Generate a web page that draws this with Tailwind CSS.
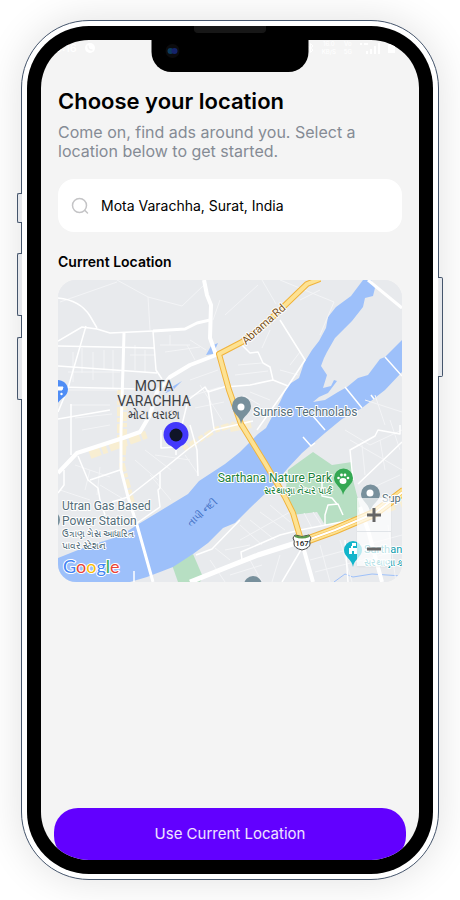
<!DOCTYPE html>
<html lang="en">
<head>
    <meta charset="UTF-8">
    <meta name="viewport" content="width=device-width, initial-scale=1.0">
    <title>Choose your location</title>
    <script src="https://cdn.jsdelivr.net/npm/@tailwindcss/browser@4"></script>
</head>
<body class="bg-white font-['Inter','Noto_Sans',sans-serif] text-black">
    <div class="min-h-screen flex px-[21px] py-5 overflow-hidden">
        <!-- Phone frame -->
        <div class="relative flex flex-1 rounded-[68px] border border-slate-600 bg-white p-[5px] shadow-[0_0_40px_rgba(0,0,0,0.12)]">
            <!-- Side keys -->
            <span class="absolute -left-[5px] top-[172px] h-[30px] w-[5px] rounded-l-xs border border-r-0 border-slate-600 bg-gray-200"></span>
            <span class="absolute -left-[5px] top-[232px] h-[63px] w-[5px] rounded-l-xs border border-r-0 border-slate-600 bg-gray-200"></span>
            <span class="absolute -left-[5px] top-[316px] h-[63px] w-[5px] rounded-l-xs border border-r-0 border-slate-600 bg-gray-200"></span>
            <span class="absolute -right-[5px] top-[256px] h-[100px] w-[5px] rounded-r-xs border border-l-0 border-slate-600 bg-gray-200"></span>

            <div class="relative flex flex-1 rounded-[62px] bg-black p-[14px]">
                <span class="absolute left-1/2 top-0 h-[7px] w-[72px] -translate-x-1/2 rounded-b-sm border border-t-0 border-neutral-900 bg-neutral-900"></span>

                <main class="relative flex flex-1 flex-col overflow-hidden rounded-[48px] bg-[#f4f4f4]">
                    <!-- Notch -->
                    <div class="absolute left-1/2 top-0 z-10 h-8 w-[157px] -translate-x-1/2 rounded-b-[20px] bg-black">
                        <svg class="ml-3 mt-1" width="18" height="14" viewBox="0 0 18 14">
                            <circle cx="9" cy="7" r="7" fill="#0b0b0d"/>
                            <circle cx="7" cy="7" r="3" fill="#0c3a5c"/>
                            <circle cx="11" cy="7" r="3" fill="#15236b"/>
                        </svg>
                    </div>

                    <!-- Status bar -->
                    <div class="flex h-4 items-center justify-between pl-[14px] pr-6 text-[11px] font-medium text-white">
                        <div class="flex items-center gap-2">
                            <span>3:16</span>
                            <svg width="10" height="10" viewBox="0 0 10 10">
                                <circle cx="5" cy="5" r="5" fill="#fff"/>
                                <path d="M3 3c0 2.500 1.500 4 4 4" fill="none" stroke="#f4f4f4" stroke-width="1.500" stroke-linecap="round"/>
                            </svg>
                        </div>
                        <div class="flex items-center gap-2">
                            <svg width="7" height="10" viewBox="0 0 7 10" fill="none" stroke="#fff"><path d="M1 3l5 4-2.500 2.500v-9L6 3 1 7"/></svg>
                            <div class="flex flex-col items-center text-[6px]/[8px]"><span>16.0</span><span>KB/S</span></div>
                            <div class="flex flex-col items-center text-[6px]/[8px]"><span>Vo</span><span>5G</span></div>
                            <svg width="20" height="12" viewBox="0 0 20 12" fill="#fff"><path d="M6 9h2v3H6zM10 7h2v5h-2zM14 4h2v8h-2zM18 1h2v11h-2zM0 1h2v2H0zM4 1h4v2H4z"/></svg>
                            <svg width="7" height="10" viewBox="0 0 7 10" fill="#fff"><path d="M0 1h2V0h3v1h2v9H0z"/></svg>
                        </div>
                    </div>

                    <div class="flex flex-1 flex-col px-[17px] pt-[31px]">
                        <h1 class="text-[22px]/[28px] font-semibold">Choose your location</h1>
                        <p class="mt-2 max-w-[320px] text-[16px]/[19px] text-[#858b94]">Come on, find ads around you. Select a location below to get started.</p>

                        <label class="mt-[18px] flex h-[53px] items-center gap-3 rounded-2xl bg-white px-[13px]">
                            <svg width="18" height="18" viewBox="0 0 18 18" fill="none" stroke="#c4c4c6" stroke-width="1.500" stroke-linecap="round">
                                <circle cx="8.500" cy="8.500" r="7"/>
                                <path d="M14 13.500l2.500 2.500"/>
                            </svg>
                            <input type="text" aria-label="Location" value="Mota Varachha, Surat, India" class="min-w-0 flex-1 bg-transparent text-[14px] outline-none">
                        </label>

                        <h2 class="mt-[19px] text-[14px]/[22px] font-semibold">Current Location</h2>

                        <!-- Map -->
                        <div class="relative mt-[7px] overflow-hidden rounded-[18px] bg-[#e8eaed]">
                            <svg class="block w-full" viewBox="58 280 344 302" font-family="Roboto, 'Noto Sans', sans-serif">
                                <rect x="58" y="280" width="344" height="302" fill="#e8eaed"/>

                                <!-- parks -->
                                <g fill="#b7dfc3">
                                    <path d="M313 452L332 465L352 462L353 480L360 507L357 517L342 522L325 525L317 512L292 515L285 497L288 470Z"/>
                                    <path d="M172 565L193 554L203 577L200 582H178Z"/>
                                </g>

                                <!-- river -->
                                <path fill="#9dc0fa" d="M363 280L351 296L336 307L328 317L326 328L319 341L312 350L304 363L299 378L288 385L280 402L266 428L258 434L240 452L225 464L199 481L188 494L160 511L137 525L120 536L88 546L58 558V582H130L147 577L173 567L193 554L208 543L223 528L235 523L250 508L272 487L288 468L302 453L325 433L342 419L362 408L385 390L402 372V340L385 357L380 359L368 375L358 378L347 387L338 392L325 400L313 402L319 397L328 393L337 381L334 380L331 386L323 388L327 375L321 366L324 358L327 352L335 338L345 328L352 321L363 307L365 298L373 296L375 288L371 280Z"/>
                                <g fill="#9dc0fa">
                                    <path d="M206 355L211 346L218 343L213 354Z"/>
                                    <path d="M165 391L182 381L174 389L166 393Z"/>
                                </g>
                                <path d="M334 582L345 574L353 577L372 574L402 576" fill="none" stroke="#9dc0fa"/>

                                <!-- built-up areas -->
                                <g stroke="#f8eed2" fill="none">
                                    <path d="M120 390V440M124 395V440L122 465L132 503" stroke-width="6" stroke-dasharray="9 2 4 2"/>
                                    <path d="M90 455L148 434" stroke-width="8" stroke-dasharray="11 2 5 3"/>
                                    <path d="M184 449L215 430L235 424" stroke-width="6" stroke-dasharray="5 2 8 3"/>
                                    <path d="M330 530L402 503" stroke-width="8" stroke-dasharray="9 6"/>
                                    <path d="M251 424L230 428" stroke-width="8"/>
                                </g>

                                <!-- small streets -->
                                <g fill="none" stroke="#f3f4f6" stroke-width="1">
                                    <path d="M60 302L117 282M117 280L148 297L150 330M148 297L182 306L204 285M225 315L258 285M262 280L276 304M280 280L334 302L320 335"/>
                                    <path d="M73 352V382M82 348V373M93 352V380M104 350V370M113 350V388M135 345V370M145 350V372M68 372H120M66 390H118M130 355H155M160 345H190M165 352L200 347M170 335V345M187 345L195 360"/>
                                    <path d="M135 402H147M132 415L145 420M70 405H110M75 418L112 414M82 430L110 425M190 340L206 350M220 300L213 320M190 380L218 370M200 385L222 420M185 398L220 387M195 408L224 402"/>
                                    <path d="M75 465L110 477M90 470L85 490M100 467L97 495M60 490L90 500M135 460L158 480M145 450L171 470M150 475L171 500M185 455L198 474M100 485L125 500M155 455L190 460"/>
                                    <path d="M238 365L262 363M235 375L268 371M243 395L260 405M250 392L270 400M280 370L298 375M290 365L300 352M270 330L262 348M320 290L300 300"/>
                                    <path d="M345 430L370 445L402 430M350 440L402 470M362 445L365 475M380 440L385 470M390 420L400 450M365 400L402 412M375 395L385 425M372 488L400 475"/>
                                    <path d="M240 525L262 545M250 520L275 540M260 512L285 530M270 505L290 522M240 540L290 512M280 555L272 582M250 560L262 582M230 575L262 565M320 545L330 582M340 540L352 582M310 560L402 535M315 572L402 550M388 525L396 582"/>
                                    <path d="M210 560L225 582M225 550L250 545M215 548L230 560M304 513L312 528M313 512L322 526"/>
                                </g>

                                <!-- white roads -->
                                <g fill="none" stroke="#fff" stroke-width="1.500" stroke-linejoin="round">
                                    <path d="M58 298Q80 300 90 316L97 328M58 341L82 327L97 329L110 333L153 331M86 326L68 388L58 412"/>
                                    <path d="M58 346L154 348M58 366L157 373M58 387L140 389M58 419L110 410M153 331L156 370L162 379"/>
                                    <path d="M58 493L64 485V470M71 404V455M78 456L88 480L98 488L100 500L105 515M90 480L120 470M112 502L128 497"/>
                                    <path d="M128 497L160 472L187 450L214 430L253 421M160 472V488L158 490L160 507L137 523M161 430V448L176 447V455M190 425L197 450L198 476"/>
                                    <path d="M182 425L188 400L205 387L208 392L227 386M208 390L214 429"/>
                                    <path d="M280 320L305 360L288 386L257 430M225 387L250 385L273 380L288 386M242 345L250 353L258 352L263 363L270 367L273 380"/>
                                    <path d="M385 357L402 376M345 387L362 408M371 395L374 399M240 520L212 549L196 555M402 442L358 484M400 425V434L378 430L375 436L350 450L353 480"/>
                                    <path d="M242 560L241 552L280 535L300 530L357 519M303 437L311 446L315 443M313 416L325 430M134 571V582M345 540L348 582M302 548L282 582M325 525V515L328 505L338 504L343 515"/>
                                    <path d="M337 504L332 498L322 496V480"/>
                                </g>
                                <g fill="none" stroke="#fff" stroke-linejoin="round">
                                    <path d="M153 331L185 329L197 323L210 320" stroke-width="3"/>
                                    <path d="M124 333L123 368L121 430V470L128 497L137 525L153 582" stroke-width="3"/>
                                    <path d="M368 280L402 308" stroke-width="3"/>
                                    <path d="M204 280L207 295L211 305L210 338L216 355L190 365L170 377L157 392L150 415L140 432L123 438L77 453L58 473" stroke-width="4"/>
                                    <path d="M190 582L230 566L258 555L302 541" stroke-width="5"/>
                                    <path d="M302 543L313 582M360 507L368 530L382 582" stroke-width="4"/>
                                </g>

                                <!-- highways -->
                                <g fill="none" stroke-linejoin="round">
                                    <path d="M320 279L307 284L280 310L262 327L242 342L219 354L229 390L241 424L265 463L285 497L293 513L301 540" stroke="#f0b33c" stroke-width="6"/>
                                    <path d="M320 279L307 284L280 310L262 327L242 342L219 354L229 390L241 424L265 463L285 497L293 513L301 540" stroke="#fde293" stroke-width="4"/>
                                    <path d="M302 542L335 530L375 513L404 491" stroke="#f0b33c" stroke-width="9"/>
                                    <path d="M302 542L335 530L375 513L404 491" stroke="#fde293" stroke-width="7"/>
                                    <path d="M302 542L335 530L375 513L404 491" stroke="#f5bd4c" stroke-width="3"/>
                                    <path d="M302 542L335 530L375 513L404 491" stroke="#fff" stroke-width="2"/>
                                </g>

                                <!-- route shield -->
                                <path d="M295 535Q302 538 309 535L311 538Q309 541 310 544Q310 548 302 550Q294 548 294 544Q295 541 293 538Z" fill="#fff" stroke="#444" stroke-width="1"/>
                                <path d="M295 536Q302 539 309 536" fill="none" stroke="#5b9b4c" stroke-width="2"/>
                                <text x="302" y="546" text-anchor="middle" font-size="8" font-weight="500" fill="#222">167</text>

                                <!-- place pins -->
                                <g fill="#78909c">
                                    <path d="M241 424C240 415 232 414 232 406A9 9 0 0 1 251 406C251 414 243 415 241 424Z"/>
                                    <path d="M370 512C369 503 361 501 361 494A9 9 0 0 1 380 494C380 501 372 503 370 512Z"/>
                                    <circle cx="253" cy="585" r="9"/>
                                    <circle cx="51" cy="520" r="9"/>
                                </g>
                                <circle cx="241" cy="407" r="3.500" fill="#fff"/>
                                <circle cx="370" cy="493" r="3.500" fill="#fff"/>
                                <circle cx="253" cy="586" r="4" fill="#546e7a"/>
                                <path d="M343 495C342 487 334 485 334 478A9 9 0 0 1 353 478C353 485 345 487 343 495Z" fill="#34a853"/>
                                <g fill="#fff">
                                    <ellipse cx="343" cy="481" rx="3.500" ry="3"/>
                                    <circle cx="338.500" cy="478" r="1.300"/>
                                    <circle cx="341.500" cy="475" r="1.400"/>
                                    <circle cx="345" cy="475" r="1.400"/>
                                    <circle cx="348" cy="478" r="1.300"/>
                                </g>
                                <path d="M353 567C352 559 344 557 344 550A9 9 0 0 1 362 550C362 557 354 559 353 567Z" fill="#12b5cb"/>
                                <path d="M349 554V548H351V546H352V543H356V546H353V548H357V554H354V551H352V554Z" fill="#fff"/>
                                <path d="M57 406C58 398 68 398 68 389A10 10 0 0 0 51 383V400Z" fill="#4f8df5"/>
                                <path d="M56 387H63L62 390H56" fill="#fff" stroke="#fff"/>
                                <circle cx="61.500" cy="394" r="1.200" fill="#fff"/>

                                <!-- labels -->
                                <g stroke="#fff" stroke-width="2" stroke-linejoin="round" paint-order="stroke">
                                    <g text-anchor="middle" fill="#3c4043" stroke="#e8eaed">
                                        <text x="154" y="391" font-size="14">MOTA</text>
                                        <text x="154" y="406" font-size="14">VARACHHA</text>
                                        <text x="154" y="419" font-size="12">મોટા વરાછા</text>
                                    </g>
                                    <g fill="#546e7a">
                                        <text x="253" y="416" font-size="12">Sunrise Technolabs</text>
                                        <text x="62" y="510" font-size="12">Utran Gas Based</text>
                                        <text x="62" y="525" font-size="12">Power Station</text>
                                        <text x="62" y="537" font-size="9">ઉત્રાણ ગેસ આધારિત</text>
                                        <text x="62" y="549" font-size="9">પાવર સ્ટેશન</text>
                                        <text x="382" y="502" font-size="11">Sup</text>
                                    </g>
                                    <g fill="#188038" text-anchor="end">
                                        <text x="332" y="482" font-size="12">Sarthana Nature Park</text>
                                        <text x="332" y="494" font-size="9">સરથાણા નેચર પાર્ક</text>
                                    </g>
                                    <g fill="#129eaf">
                                        <text x="364" y="553" font-size="11">Sarthan</text>
                                        <text x="364" y="566" font-size="9">સરથાણા ક</text>
                                    </g>
                                    <text transform="translate(246 345) rotate(-42)" font-size="11" fill="#7a5218">Abrama Rd</text>
                                </g>
                                <text transform="translate(191 527) rotate(-42)" font-size="10" fill="#3f6fc4">તાપી નદી</text>

                                <!-- current position -->
                                <path d="M176 450L171 446A12.500 12.500 0 1 1 181 446Z" fill="#4338fb"/>
                                <circle cx="176" cy="435" r="6.500" fill="#101528"/>

                                <text x="63" y="573" font-size="18" font-weight="400" font-family="Lato, sans-serif" stroke="#fff" stroke-width="2" paint-order="stroke"><tspan fill="#4285f4">G</tspan><tspan fill="#ea4335">o</tspan><tspan fill="#fbbc04">o</tspan><tspan fill="#4285f4">g</tspan><tspan fill="#34a853">l</tspan><tspan fill="#ea4335">e</tspan></text>
                            </svg>

                            <!-- Zoom controls -->
                            <div class="absolute bottom-4 right-[11px] flex w-[34px] flex-col divide-y divide-gray-300/60 bg-white/70 shadow-xs">
                                <button type="button" aria-label="Zoom in" class="flex h-[34px] items-center justify-center">
                                    <svg width="16" height="16" viewBox="0 0 16 16" stroke="#666" stroke-width="3"><path d="M8 1v14M1 8h14"/></svg>
                                </button>
                                <button type="button" aria-label="Zoom out" class="flex h-[34px] items-center justify-center">
                                    <svg width="16" height="16" viewBox="0 0 16 16" stroke="#666" stroke-width="3"><path d="M1 8h14"/></svg>
                                </button>
                            </div>
                        </div>
                    </div>

                    <div class="px-[13px]">
                        <button type="button" class="h-[52px] w-full rounded-[24px] bg-[#6200ff] text-[15px] text-white/90">Use Current Location</button>
                    </div>
                </main>
            </div>
        </div>
    </div>
</body>
</html>
